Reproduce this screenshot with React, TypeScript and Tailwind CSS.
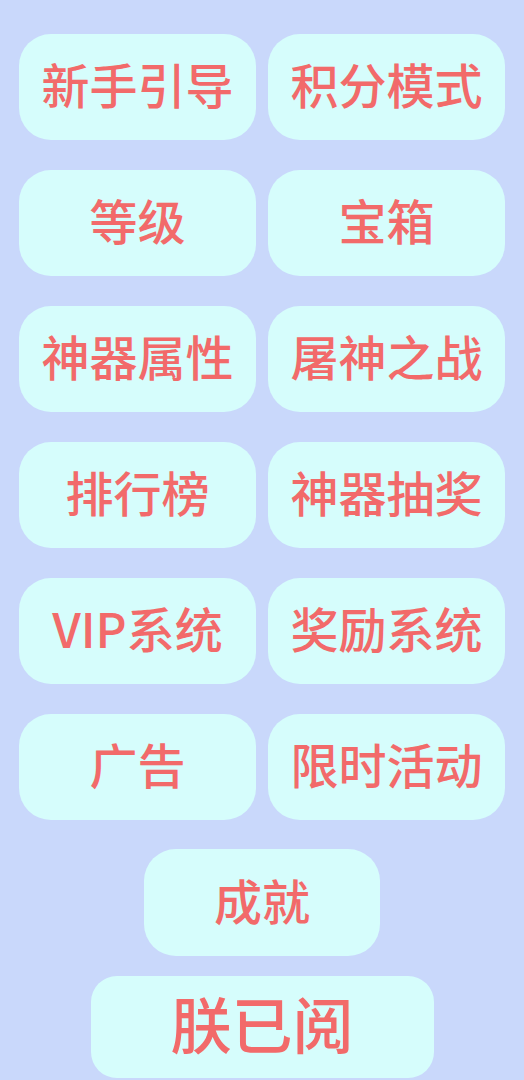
const items = [
  "新手引导",
  "积分模式",
  "等级",
  "宝箱",
  "神器属性",
  "屠神之战",
  "排行榜",
  "神器抽奖",
  "VIP系统",
  "奖励系统",
  "广告",
  "限时活动",
];

const font = { fontFamily: '"Noto Sans CJK SC", "Noto Sans", sans-serif' };

function MenuButton({ label }: { label: string }) {
  return (
    <button className="flex h-[106px] items-center justify-center rounded-[32px] bg-[#d6fdfc] pb-[8px] text-[48px] font-medium leading-none text-[#f26a6a]">
      {label}
    </button>
  );
}

export default function App() {
  return (
    <div
      className="flex min-h-[1080px] flex-col items-center bg-[#c9d8fb] px-[19px] pt-[34px]"
      style={font}
    >
      {/* Two-column menu grid */}
      <div className="grid w-full grid-cols-2 gap-x-[12px] gap-y-[30px]">
        {items.map((label) => (
          <MenuButton key={label} label={label} />
        ))}
      </div>

      <button className="mt-[29px] flex h-[107px] w-[236px] items-center justify-center rounded-[32px] bg-[#d6fdfc] pb-[8px] text-[48px] font-medium leading-none text-[#f26a6a]">
        成就
      </button>

      {/* Confirm button */}
      <button className="mt-[20px] flex h-[102px] w-[343px] items-center justify-center rounded-[26px] bg-[#d6fdfc] pb-[10px] text-[61px] font-medium leading-none text-[#f26a6a]">
        朕已阅
      </button>
    </div>
  );
}
